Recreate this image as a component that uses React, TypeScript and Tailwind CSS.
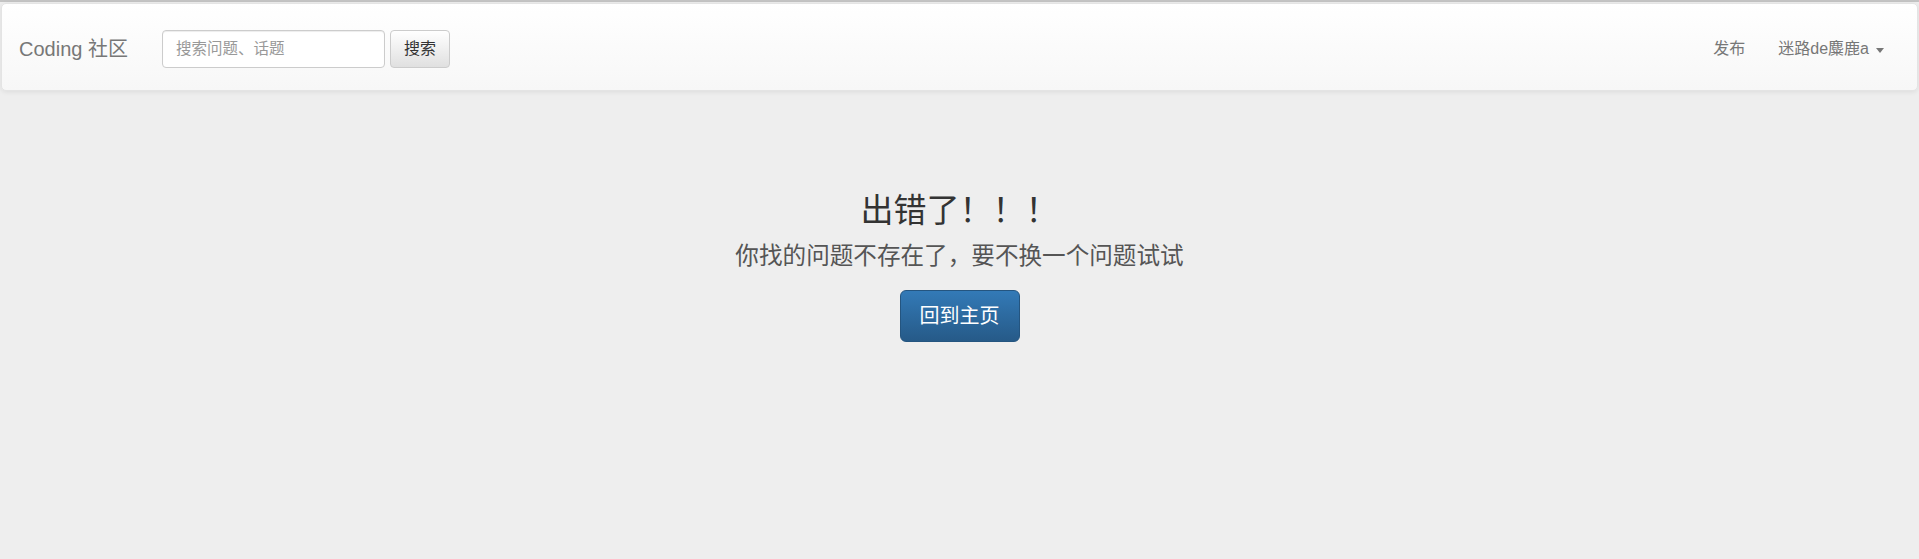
const font = "font-['Liberation_Sans','Noto_Sans_CJK_SC',sans-serif]"

const Navbar = () => {
  return (
    <nav className="mx-px flex h-[88px] items-center rounded-[5px] border border-[#e4e4e4] bg-gradient-to-b from-white to-[#f7f7f7] pt-[4px] shadow-[0_1px_5px_rgba(0,0,0,0.08)]">
      <a className="ml-[17px] text-[20px] text-[#777]">Coding 社区</a>
      <form className="ml-[34px] flex items-center gap-[5px]">
        <input
          type="text"
          placeholder="搜索问题、话题"
          className="h-[38px] w-[223px] rounded-[4px] border border-[#ccc] bg-white px-[13px] text-[15.5px] text-[#555] shadow-[inset_0_1px_1px_rgba(0,0,0,0.075)] outline-none placeholder:text-[#999]"
        />
        <button
          type="button"
          className="h-[38px] w-[60px] rounded-[4px] border border-[#ccc] bg-gradient-to-b from-white to-[#e0e0e0] text-[16px] text-[#333] shadow-[0_1px_0_rgba(255,255,255,0.15)]"
        >
          搜索
        </button>
      </form>
      <ul className="ml-auto mr-[33px] flex items-center text-[16px] text-[#777]">
        <li>
          <a>发布</a>
        </li>
        <li className="ml-[33px] flex items-center">
          <a>迷路de麋鹿a</a>
          <span className="ml-[7px] mt-[2px] h-0 w-0 border-x-[4px] border-t-[5px] border-x-transparent border-t-[#777]" />
        </li>
      </ul>
    </nav>
  )
}

export default function App() {
  return (
    <div className={`${font} min-h-[559px] bg-[#eeeeee]`}>
      <div className="h-[2px] bg-[#c4c4c4]" />
      <div className="pt-px">
        <Navbar />
      </div>
      <main className="flex flex-col items-center pt-[102px] text-center">
        <h2 className="h-[36px] text-[33px] leading-[36px] text-[#333]">出错了！！！</h2>
        <h3 className="mt-[14px] h-[26px] text-[23.6px] leading-[26px] text-[#555]">
          你找的问题不存在了，要不换一个问题试试
        </h3>
        <button
          type="button"
          className="mt-[21px] h-[52px] w-[120px] rounded-[6px] border border-[#245580] bg-gradient-to-b from-[#337ab7] to-[#265a88] text-[20px] text-white"
        >
          回到主页
        </button>
      </main>
    </div>
  )
}
